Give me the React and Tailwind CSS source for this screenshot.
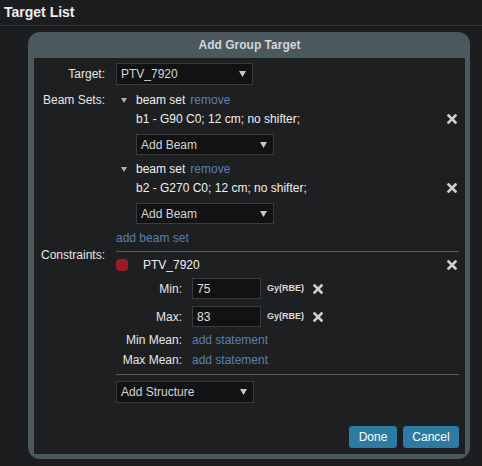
import { useState } from "react";

const font = { fontFamily: '"Liberation Sans", Arial, sans-serif' };

// bold close cross used on beams and constraints
const XIcon = ({ className = "" }) => (
  <svg width="10" height="10" viewBox="0 0 10 10" className={className}>
    <path d="M1.5 1.5 L8.5 8.5 M8.5 1.5 L1.5 8.5" stroke="#cfcfcf" strokeWidth="2.6" strokeLinecap="square" />
  </svg>
);

const Caret = () => (
  <svg width="7" height="6" viewBox="0 0 7 6">
    <path d="M0 0 H7 L3.5 6 Z" fill="#c8c8c8" />
  </svg>
);

const Select = ({ value, className = "" }) => (
  <div
    className={`flex items-center justify-between bg-[#111214] border border-[#3a3b3d] pl-[4px] pr-[6px] text-[12px] text-[#d6d6d6] ${className}`}
  >
    <span>{value}</span>
    <Caret />
  </div>
);

const Link = ({ children, className = "" }) => (
  <span className={`text-[#5a7fb3] cursor-pointer ${className}`}>{children}</span>
);

const BeamSet = ({ beam, first }) => (
  <div className={first ? "" : "mt-[4px]"}>
    <div className="flex items-center h-[20px]">
      <span className="w-[20px] pl-[5px] flex items-center">
        <svg width="6" height="5" viewBox="0 0 6 5">
          <path d="M0 0 H6 L3 5 Z" fill="#b0b0b0" />
        </svg>
      </span>
      <span className="text-[#f0f0f0]">beam set</span>
      <Link className="ml-[5px]">remove</Link>
    </div>
    <div className="flex items-center justify-between h-[18px] pl-[20px] pr-[2px]">
      <span className="text-[#f0f0f0]">{beam}</span>
      <XIcon />
    </div>
    <Select value="Add Beam" className="ml-[20px] mt-[6px] w-[138px] h-[21px]" />
  </div>
);

const DoseRow = ({ label, value, className = "" }) => (
  <div className={`flex items-center ${className}`}>
    <span className="w-[66px] text-right text-[#e6e6e6]">{label}</span>
    <input
      defaultValue={value}
      className="ml-[10px] w-[69px] h-[21px] bg-[#111214] border border-[#3a3b3d] px-[4px] text-[12px] text-[#e0e0e0] outline-none"
    />
    <span className="ml-[6px] text-[9px] font-bold text-[#dcdcdc]">Gy(RBE)</span>
    <XIcon className="ml-[9px]" />
  </div>
);

const MeanRow = ({ label, className = "" }) => (
  <div className={`flex items-center h-[16px] ${className}`}>
    <span className="w-[66px] text-right text-[#e6e6e6]">{label}</span>
    <Link className="ml-[10px]">add statement</Link>
  </div>
);

export default function App() {
  const [beams] = useState([
    "b1 - G90 C0; 12 cm; no shifter;",
    "b2 - G270 C0; 12 cm; no shifter;",
  ]);

  return (
    <div style={font} className="w-[482px] h-[466px] bg-[#1c1d1f] text-[12px] overflow-hidden">
      <div className="h-[26px] border-b border-[#343538] pl-[4px] flex items-center">
        <h1 className="text-[14px] font-bold text-[#eeeeee]">Target List</h1>
      </div>

      <div className="mt-[6px] ml-[28px] w-[442px] bg-[#4b585e] rounded-[12px] px-[6px] pb-[5px] pr-[5px]">
        <div className="h-[26px] flex items-center justify-center font-bold text-[#d2d6d8]">
          Add Group Target
        </div>

        <div className="bg-[#1e1f21] pt-[5px] pr-[6px] pb-[6px]">
          <div className="flex">
            <span className="w-[71px] text-right self-center text-[#e6e6e6]">Target:</span>
            <Select value="PTV_7920" className="ml-[11px] w-[137px] h-[22px]" />
          </div>

          <div className="flex mt-[5px]">
            <span className="w-[71px] text-right h-[20px] leading-[20px] text-[#e6e6e6]">Beam Sets:</span>
            <div className="ml-[11px] flex-1">
              {beams.map((b, i) => (
                <BeamSet key={b} beam={b} first={i === 0} />
              ))}
              <Link className="block mt-[6px] h-[16px] leading-[16px]">add beam set</Link>
            </div>
          </div>

          <div className="flex mt-[2px]">
            <span className="w-[71px] text-right h-[14px] leading-[14px] text-[#e6e6e6]">Constraints:</span>
            <div className="ml-[11px] flex-1">
              <div className="mt-[3px] border-t border-[#5a5b5d]" />
              <div className="flex items-center justify-between h-[16px] mt-[5px] pr-[2px]">
                <div className="flex items-center">
                  <span className="w-[12px] h-[12px] rounded-[4px] bg-[#9a1b25]" />
                  <span className="ml-[15px] text-[#f0f0f0]">PTV_7920</span>
                </div>
                <XIcon />
              </div>
              <DoseRow label="Min:" value="75" className="mt-[5px]" />
              <DoseRow label="Max:" value="83" className="mt-[7px]" />
              <MeanRow label="Min Mean:" className="mt-[5px]" />
              <MeanRow label="Max Mean:" className="mt-[4px]" />
              <div className="mt-[6px] border-t border-[#5a5b5d]" />
              <Select value="Add Structure" className="mt-[6px] w-[138px] h-[22px]" />
              <div className="flex justify-end gap-[6px] mt-[23px]">
                <button className="w-[48px] h-[22px] rounded-[3px] bg-[#2d7aa3] text-white text-[12px]">
                  Done
                </button>
                <button className="w-[56px] h-[22px] rounded-[3px] bg-[#2d7aa3] text-white text-[12px]">
                  Cancel
                </button>
              </div>
            </div>
          </div>
        </div>
      </div>
    </div>
  );
}
